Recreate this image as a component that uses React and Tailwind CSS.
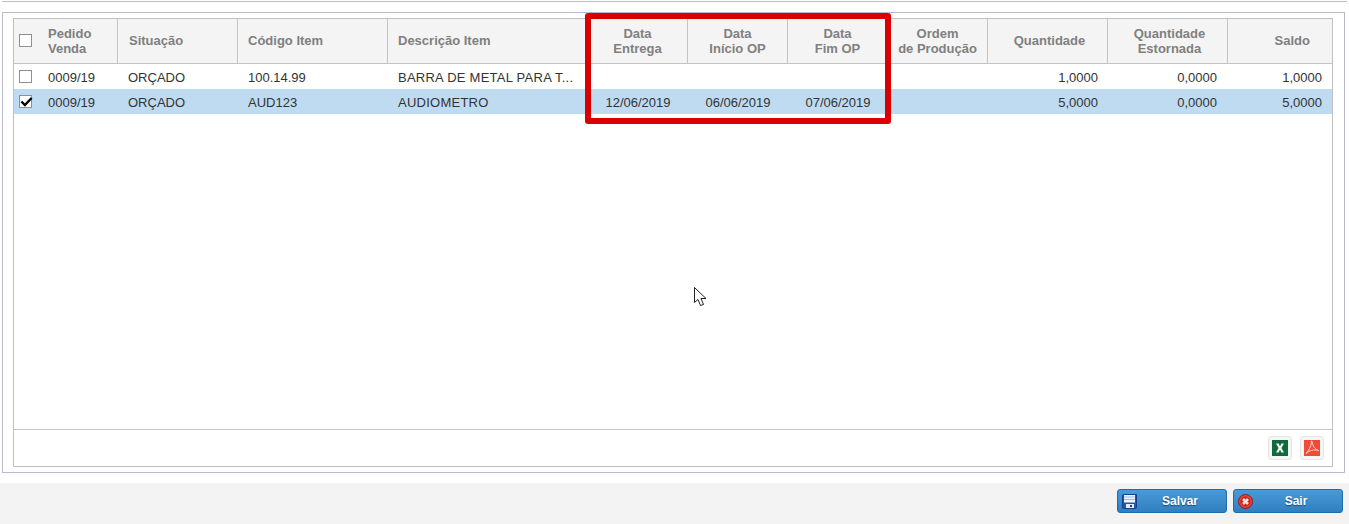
import React from "react";

const FONT = { fontFamily: '"Liberation Sans", Arial, sans-serif' };

const gridCols = "grid grid-cols-[104px_120px_150px_200px_100px_100px_100px_100px_120px_120px_104px]";

const Checkbox = ({ checked }) => (
  <span className="relative block w-[13px] h-[13px] border border-[#8f8f8f] bg-white">
    {checked && (
      <svg viewBox="0 0 14 14" className="absolute left-0 top-0 w-[13px] h-[11px]">
        <path d="M0.5 7 L5 11.5 L13.5 2.5" fill="none" stroke="#000" strokeWidth="3" />
      </svg>
    )}
  </span>
);

const HeadCell = ({ children, className = "" }) => (
  <div className={"flex items-center pb-px border-r border-[#c4c4c4] leading-[15px] font-bold text-[#808080] " + className}>
    {children}
  </div>
);

const rows = [
  {
    checked: false,
    pedido: "0009/19",
    situacao: "ORÇADO",
    codigo: "100.14.99",
    descricao: "BARRA DE METAL PARA T...",
    entrega: "",
    inicio: "",
    fim: "",
    qtd: "1,0000",
    estornada: "0,0000",
    saldo: "1,0000",
  },
  {
    checked: true,
    pedido: "0009/19",
    situacao: "ORÇADO",
    codigo: "AUD123",
    descricao: "AUDIOMETRO",
    entrega: "12/06/2019",
    inicio: "06/06/2019",
    fim: "07/06/2019",
    qtd: "5,0000",
    estornada: "0,0000",
    saldo: "5,0000",
  },
];

const ExcelIcon = () => (
  <svg viewBox="0 0 16 16" className="w-4 h-4">
    <rect width="16" height="16" fill="#0f6b3c" />
    <path d="M4 3.5 H6.6 L8 6.2 L9.5 3.5 H12 L9.3 8 L12 12.5 H9.5 L8 9.8 L6.5 12.5 H4 L6.7 8 Z" fill="#fff" />
  </svg>
);

const PdfIcon = () => (
  <svg viewBox="0 0 16 16" className="w-4 h-4">
    <rect width="16" height="16" fill="#ee4c36" />
    <path
      d="M7.3 1 C7.6 5 6 9 2 13.5 C5.5 10.5 10 9 14.5 10.5 C11 9.5 8.5 6 8 1 Z"
      fill="none"
      stroke="#fbd5cf"
      strokeWidth="1"
    />
  </svg>
);

const SaveIcon = () => (
  <svg viewBox="0 0 15 15" className="w-[15px] h-[15px]">
    <path d="M0.5 1.5 Q0.5 0.5 1.5 0.5 H14.5 V13.5 Q14.5 14.5 13.5 14.5 H1.5 Q0.5 14.5 0.5 13.5 Z" fill="#1b58b4" stroke="#123f86" />
    <rect x="2" y="1" width="11" height="7.5" fill="#eef3fa" />
    <path d="M2 3 H13 M2 5.5 H13" stroke="#9fb8dc" />
    <rect x="4" y="10" width="8" height="4" fill="#e8edf5" />
    <rect x="8" y="11" width="2" height="2" fill="#1b3f86" />
  </svg>
);

const ExitIcon = () => (
  <svg viewBox="0 0 15 15" className="w-[15px] h-[15px]">
    <circle cx="7.5" cy="7.5" r="7" fill="#e2453d" stroke="#8f1a16" />
    <circle cx="7.5" cy="7.5" r="5" fill="#c9251f" />
    <path d="M5 5 L10 10 M10 5 L5 10" stroke="#f8dcdc" strokeWidth="2.6" />
  </svg>
);

const ActionButton = ({ icon, label }) => (
  <button className="relative w-[110px] h-6 pl-4 rounded-[3px] border border-[#1f6cab] bg-gradient-to-b from-[#4a9ad6] to-[#2f7fc1] text-xs font-bold text-white [text-shadow:0_1px_1px_#174a75]">
    <span className="absolute left-[4px] top-[4px]">{icon}</span>
    {label}
  </button>
);

export default function App() {
  return (
    <div className="relative flex flex-col w-[1349px] h-[524px] bg-white text-[13px] text-[#333]" style={FONT}>
      <div className="mx-[2px] h-[2px] shrink-0 border-b border-[#bcbccf]" />

      <div className="mt-[10px] ml-[2px] mr-[4px] h-[461px] shrink-0 border border-[#b9b9cd] pt-[5px] pl-[10px] pr-[12px]">
        <div className="flex flex-col h-[449px] w-[1320px] border border-[#c0c0c0]">
          <div className={gridCols + " h-[45px] shrink-0 bg-[#f4f4f4] border-b border-[#c4c4c4]"}>
            <HeadCell className="pl-[34px] relative">
              <span className="absolute left-[5px] top-[15px]">
                <Checkbox />
              </span>
              <span>
                Pedido
                <br />
                Venda
              </span>
            </HeadCell>
            <HeadCell className="pl-[11px]">Situação</HeadCell>
            <HeadCell className="pl-[10px]">Código Item</HeadCell>
            <HeadCell className="pl-[10px] border-r-0">Descrição Item</HeadCell>
            <HeadCell className="justify-center text-center">
              Data
              <br />
              Entrega
            </HeadCell>
            <HeadCell className="justify-center text-center">
              Data
              <br />
              Início OP
            </HeadCell>
            <HeadCell className="justify-center text-center">
              Data
              <br />
              Fim OP
            </HeadCell>
            <HeadCell className="justify-center text-center">
              Ordem
              <br />
              de Produção
            </HeadCell>
            <HeadCell className="justify-center pl-[4px]">Quantidade</HeadCell>
            <HeadCell className="justify-center text-center pl-[4px]">
              <span>
                Quantidade
                <br />
                Estornada
              </span>
            </HeadCell>
            <HeadCell className="justify-end pr-[22px] border-r-0">Saldo</HeadCell>
          </div>

          <div className="flex-1">
            {rows.map((row, idx) => (
              <div
                key={idx}
                className={gridCols + " h-[25px] pt-[3px] items-center " + (row.checked ? "bg-[#bfdbf1]" : "bg-white")}
              >
                <div className="relative pl-[34px]">
                  <span className="absolute left-[5px] top-[2px]">
                    <Checkbox checked={row.checked} />
                  </span>
                  {row.pedido}
                </div>
                <div className="pl-[10px]">{row.situacao}</div>
                <div className="pl-[10px]">{row.codigo}</div>
                <div className="pl-[10px] tracking-[0.25px]">{row.descricao}</div>
                <div className="text-center">{row.entrega}</div>
                <div className="text-center">{row.inicio}</div>
                <div className="text-center">{row.fim}</div>
                <div />
                <div className="text-right pr-[10px]">{row.qtd}</div>
                <div className="text-right pr-[11px]">{row.estornada}</div>
                <div className="text-right pr-[10px]">{row.saldo}</div>
              </div>
            ))}
          </div>

          <div className="flex items-center justify-end gap-2 h-[37px] shrink-0 border-t border-[#c4c4c4] pr-[8px]">
            <span className="flex items-center justify-center w-6 h-6 rounded-[3px] border border-[#e6e6e6] bg-[#f5f5f5]">
              <ExcelIcon />
            </span>
            <span className="flex items-center justify-center w-6 h-6 rounded-[3px] border border-[#e6e6e6] bg-[#f5f5f5]">
              <PdfIcon />
            </span>
          </div>
        </div>
      </div>

      <div className="flex flex-1 items-start justify-end gap-[6px] mt-[10px] pt-[6px] pr-[6px] bg-[#f3f3f3]">
        <ActionButton icon={<SaveIcon />} label="Salvar" />
        <ActionButton icon={<ExitIcon />} label="Sair" />
      </div>

      {/* destaque vermelho sobre as colunas de data */}
      <div className="absolute left-[585px] top-[13px] w-[306px] h-[111px] rounded-[3px] border-[6px] border-[#d80000] pointer-events-none" />

      {/* cursor do mouse */}
      <svg viewBox="0 0 14 20" className="absolute left-[694px] top-[287px] w-[14px] h-[20px] pointer-events-none">
        <path d="M0.5 0.5 V15.5 L4 12.5 L6.5 18.5 L9.5 17.5 L7 11.5 H12 Z" fill="#fff" stroke="#222" strokeWidth="1" />
      </svg>
    </div>
  );
}
